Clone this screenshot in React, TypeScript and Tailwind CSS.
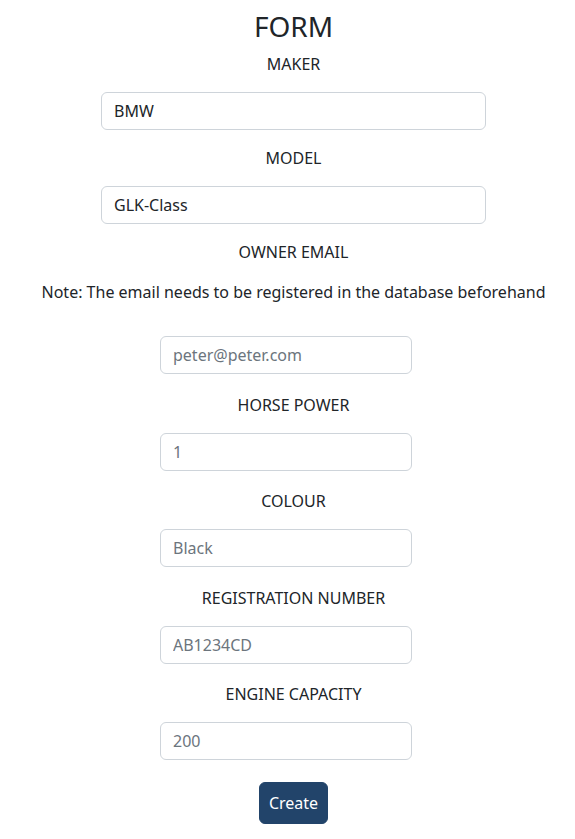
const inputCls =
	"h-[38px] rounded-[6px] border border-[#ced4da] bg-white px-3 text-base text-[#212529] placeholder:text-[#6c757d] outline-none";

function Label({ children, className = "" }: { children: React.ReactNode; className?: string }) {
	return <p className={`text-base leading-6 ${className}`}>{children}</p>;
}

const lowerFields = [
	{ label: "HORSE POWER", placeholder: "1" },
	{ label: "COLOUR", placeholder: "Black" },
	{ label: "REGISTRATION NUMBER", placeholder: "AB1234CD" },
	{ label: "ENGINE CAPACITY", placeholder: "200" },
];

export default function App() {
	return (
		<div
			className="min-h-[839px] bg-white pl-3 text-center text-[#212529]"
			style={{ fontFamily: '"Noto Sans", sans-serif' }}
		>
			<h1 className="pt-[9px] text-[28px] leading-[34px] font-normal">FORM</h1>
			<Label className="mt-[9px]">MAKER</Label>
			<div className="mt-4 flex justify-center">
				<input className={`${inputCls} w-[385px]`} defaultValue="BMW" />
			</div>
			<Label className="mt-4">MODEL</Label>
			<div className="mt-4 flex justify-center">
				<input className={`${inputCls} w-[385px]`} defaultValue="GLK-Class" />
			</div>
			<Label className="mt-4">OWNER EMAIL</Label>
			<Label className="mt-4">Note: The email needs to be registered in the database beforehand</Label>

			<div className="flex flex-col items-center pr-[15px]">
				<input className={`${inputCls} mt-8 w-[252px]`} placeholder="peter@peter.com" />
				{lowerFields.map((field) => (
					<div key={field.label} className="flex flex-col items-center">
						<Label className="mt-[18.5px] pl-[15px]">{field.label}</Label>
						<input className={`${inputCls} mt-4 w-[252px]`} placeholder={field.placeholder} />
					</div>
				))}
			</div>

			<div className="mt-[21.5px] flex justify-center">
				<button
					type="button"
					className="rounded-[6px] border border-[#22446a] bg-[#22446a] px-[9px] py-2 text-base leading-6 text-white"
				>
					Create
				</button>
			</div>
		</div>
	);
}
